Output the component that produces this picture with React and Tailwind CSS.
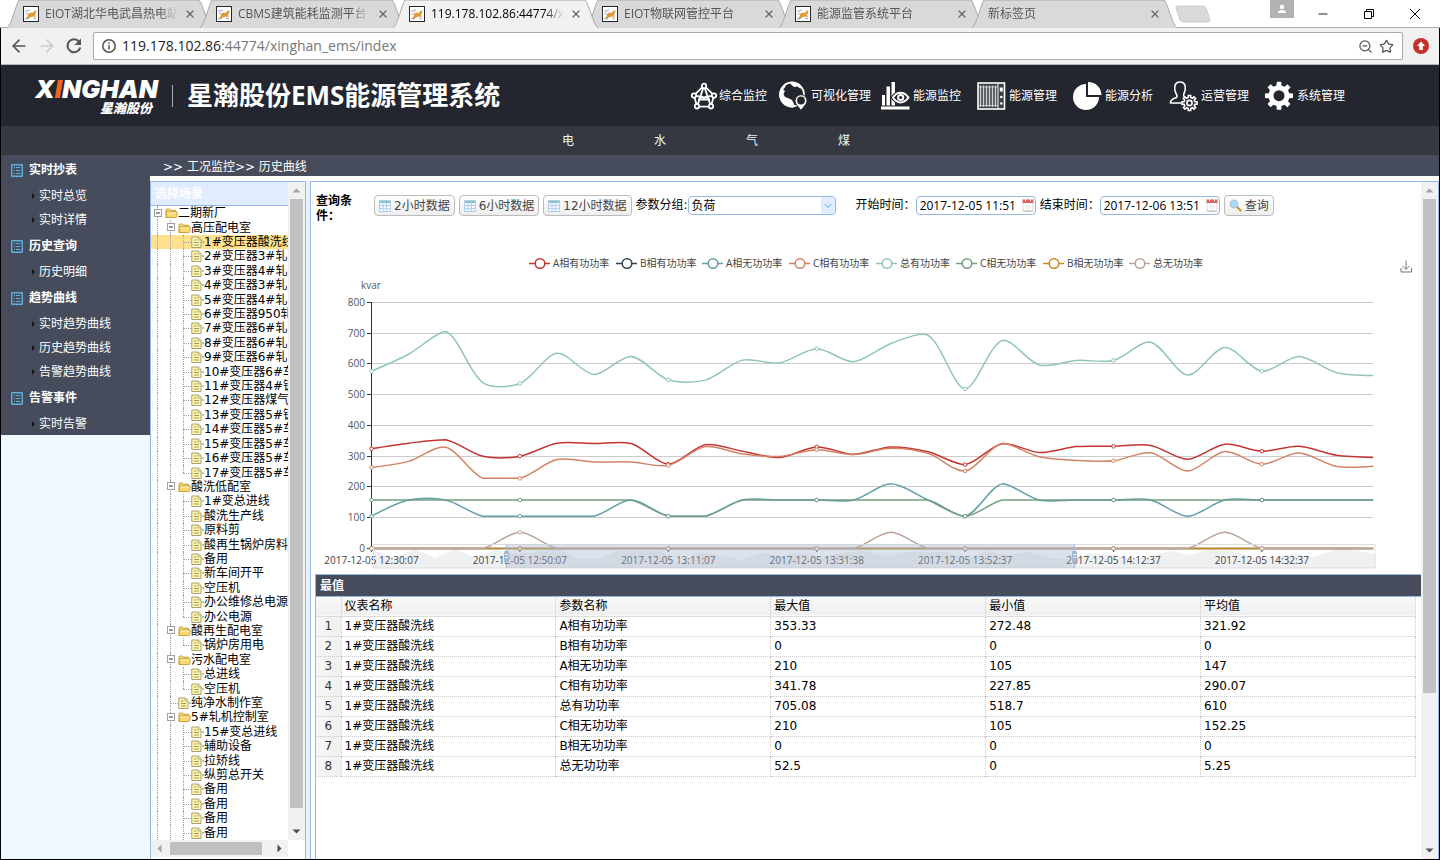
import React, { useState } from "react";
import { ArrowLeft, ArrowRight, Star, ZoomOut, Minus, X, ChevronDown } from "lucide-react";

const tabs = [
  { title: "EIOT湖北华电武昌热电站", icon: true },
  { title: "CBMS建筑能耗监测平台", icon: true },
  { title: "119.178.102.86:44774/x", icon: true, active: true },
  { title: "EIOT物联网管控平台", icon: true },
  { title: "能源监管系统平台", icon: true },
  { title: "新标签页" },
];

const sideMenu = [
  { name: "实时抄表", items: ["实时总览", "实时详情"] },
  { name: "历史查询", items: ["历史明细"] },
  { name: "趋势曲线", items: ["实时趋势曲线", "历史趋势曲线", "告警趋势曲线"] },
  { name: "告警事件", items: ["实时告警"] },
];

const tree = [
  { d: 0, name: "二期新厂" },
  { d: 1, name: "高压配电室" },
  { d: 2, name: "1#变压器酸洗线" },
  { d: 2, name: "2#变压器3#轧" },
  { d: 2, name: "3#变压器4#轧" },
  { d: 2, name: "4#变压器3#轧" },
  { d: 2, name: "5#变压器4#轧" },
  { d: 2, name: "6#变压器950轧" },
  { d: 2, name: "7#变压器6#轧" },
  { d: 2, name: "8#变压器6#轧" },
  { d: 2, name: "9#变压器6#轧" },
  { d: 2, name: "10#变压器6#车" },
  { d: 2, name: "11#变压器4#镀" },
  { d: 2, name: "12#变压器煤气" },
  { d: 2, name: "13#变压器5#镀" },
  { d: 2, name: "14#变压器5#车" },
  { d: 2, name: "15#变压器5#车" },
  { d: 2, name: "16#变压器5#车" },
  { d: 2, name: "17#变压器5#车", last: true },
  { d: 1, name: "酸洗低配室" },
  { d: 2, name: "1#变总进线" },
  { d: 2, name: "酸洗生产线" },
  { d: 2, name: "原料剪" },
  { d: 2, name: "酸再生锅炉房料" },
  { d: 2, name: "备用" },
  { d: 2, name: "新车间开平" },
  { d: 2, name: "空压机" },
  { d: 2, name: "办公维修总电源" },
  { d: 2, name: "办公电源", last: true },
  { d: 1, name: "酸再生配电室" },
  { d: 2, name: "锅炉房用电", last: true },
  { d: 1, name: "污水配电室" },
  { d: 2, name: "总进线" },
  { d: 2, name: "空压机", last: true },
  { d: 1, name: "纯净水制作室", leaf: true },
  { d: 1, name: "5#轧机控制室" },
  { d: 2, name: "15#变总进线" },
  { d: 2, name: "辅助设备" },
  { d: 2, name: "拉矫线" },
  { d: 2, name: "纵剪总开关" },
  { d: 2, name: "备用" },
  { d: 2, name: "备用" },
  { d: 2, name: "备用" },
  { d: 2, name: "备用" },
];

const Z = 157.5;
const series = [
  {
    name: "A相有功功率", color: "#c23531", lx: 540, max: "353.33", min: "272.48", avg: "321.92",
    data: [324, 342, 353.33, 300, 300, 342, 341, 341, 274, 337, 316, 296, 330, 306, 330, 314, 272.48, 340, 312, 331, 332, 335, 290, 339, 316, 332, 303, 296],
  },
  {
    name: "B相有功功率", color: "#2f4554", lx: 627, max: "0", min: "0", avg: "0",
    data: Array(28).fill(0),
  },
  {
    name: "A相无功功率", color: "#61a0a8", lx: 713, max: "210", min: "105", avg: "147",
    data: [105, Z, Z, 105, 105, 105, 105, Z, 105, 105, Z, Z, Z, Z, 210, Z, 105, 210, Z, Z, Z, Z, 105, Z, Z, Z, Z, Z],
  },
  {
    name: "C相有功功率", color: "#d48265", lx: 800, max: "341.78", min: "227.85", avg: "290.07",
    data: [263, 283, 329, 227.85, 227.85, 289, 281, 281, 270, 331, 307, 299, 321, 305, 326, 309, 252, 341.78, 298, 286, 285, 311, 252, 315, 274, 310, 267, 267],
  },
  {
    name: "总有功功率", color: "#91c7ae", lx: 887, max: "705.08", min: "518.7", avg: "610",
    data: [576, 631, 705.08, 539, 536, 634, 565, 624, 548, 547, 612, 603, 649, 607, 666, 693, 518.7, 676, 596, 611, 611, 670, 564, 653, 576, 624, 572, 562],
  },
  {
    name: "C相无功功率", color: "#749f83", lx: 967, max: "210", min: "105", avg: "152.25",
    data: [Z, Z, Z, Z, Z, Z, Z, Z, 105, 105, Z, Z, Z, Z, Z, Z, 105, Z, Z, Z, Z, Z, Z, Z, Z, Z, Z, Z],
  },
  {
    name: "B相无功功率", color: "#ca8622", lx: 1054, max: "0", min: "0", avg: "0",
    data: Array(28).fill(0),
  },
  {
    name: "总无功功率", color: "#bda29a", lx: 1140, max: "52.5", min: "0", avg: "5.25",
    data: Array(28).fill(0).map((v, i) => ([4, 14, 23].includes(i) ? 52.5 : v)),
  },
];

const times = ["12:30:07", "12:50:07", "13:11:07", "13:31:38", "13:52:37", "14:12:37", "14:32:37"];

const px = (i) => 371.5 + i * 37.1;
const py = (v) => 548.5 - v * 0.3078;

// smoothed path, control points are clamped to the bounding box of the series
const smoothPath = (data) => {
  const pts = data.map((v, i) => [px(i), py(v)]);
  const lo = Math.min(...pts.map((p) => p[1]));
  const hi = Math.max(...pts.map((p) => p[1]));
  const clamp = (y) => Math.max(lo, Math.min(hi, y));
  const dist = (a, b) => Math.hypot(a[0] - b[0], a[1] - b[1]);
  let d = `M${pts[0][0]} ${pts[0][1]}`;
  let out = pts[0];
  for (let i = 1; i < pts.length; i++) {
    const p = pts[i];
    const next = pts[i + 1];
    let cp = p;
    let cpNext = p;
    if (next) {
      const prev = pts[i - 1];
      const v = [next[0] - prev[0], next[1] - prev[1]];
      const ratio = dist(p, next) / (dist(p, next) + dist(p, prev));
      cp = [p[0] - v[0] * 0.3 * (1 - ratio), clamp(p[1] - v[1] * 0.3 * (1 - ratio))];
      cpNext = [p[0] + v[0] * 0.3 * ratio, clamp(p[1] + v[1] * 0.3 * ratio)];
    }
    d += `C${out[0]} ${out[1]} ${cp[0]} ${cp[1]} ${p[0]} ${p[1]}`;
    out = cpNext;
  }
  return d;
};

const gearPath = (cx, cy, r1, r2, teeth) => {
  let d = "";
  const step = (Math.PI * 2) / teeth;
  for (let i = 0; i < teeth; i++) {
    const a = i * step - Math.PI / 2;
    [[-0.3, r1], [-0.2, r2], [0.2, r2], [0.3, r1]].forEach(([k, r], j) => {
      const x = (cx + Math.cos(a + k * step) * r).toFixed(2);
      const y = (cy + Math.sin(a + k * step) * r).toFixed(2);
      d += `${i === 0 && j === 0 ? "M" : "L"}${x} ${y}`;
    });
  }
  return d + "Z";
};

/* HEADER ICONS */
const NetworkIcon = () => (
  <svg viewBox="0 0 28 28" className="w-7 h-7 overflow-visible" fill="#23262e" stroke="#fff" strokeWidth="1.8">
    <path d="M17 3.700L7 13.300L10 24.700H24L27 13.300L17 3.700L10 24.700M17 3.700L24 24.700M7 13.300L17 15.500L27 13.300M11 17.500H23" fill="none" />
    <circle cx="17" cy="3.900" r="2.200" />
    <circle cx="7" cy="13.500" r="2.200" />
    <circle cx="27" cy="13.500" r="2.200" />
    <circle cx="10" cy="24.300" r="2.200" />
    <circle cx="24" cy="24.300" r="2.200" />
  </svg>
);

const GlobeIcon = () => (
  <svg viewBox="0 0 28 28" className="w-7 h-7 overflow-visible">
    <circle cx="13" cy="12.500" r="12" fill="none" stroke="#fff" strokeWidth="1.800" />
    <path d="M8 1.500L5.500 6L4 7.500L6 9L4.500 12L6 15L10 16.500L13 18L15 22L16 25C8 27 0 21 0.500 12C1 7 4 3 8 1.500ZM11 0.500L18 1.200L22 4.500L23.500 7L20.500 6L18.500 4.500L15 5L12.500 3Z" fill="#fff" />
    <path d="M22 28.500C19 24 16 22 16 18.700A6 6 0 0 1 28 18.700C28 22 25 24 22 28.500Z" fill="#fff" stroke="#23262e" strokeWidth="1" />
    <circle cx="22" cy="18.500" r="3.900" fill="#23262e" />
  </svg>
);

const BarsEyeIcon = () => (
  <svg viewBox="0 0 28 28" className="w-7 h-7 overflow-visible">
    <path d="M0 24.500H28.500V27.500H0ZM1 13H4V23.500H1ZM5.500 4.500H9V23.500H5.500ZM10.500 0H14V23.500H10.500Z" fill="#fff" />
    <path d="M9.500 15.500C15 6 24 6 29 15.500C24 25 15 25 9.500 15.500Z" fill="#23262e" />
    <path d="M12 15.500C16 9 23 9 27.500 15.500C23 22 16 22 12 15.500Z" fill="none" stroke="#fff" strokeWidth="2" />
    <circle cx="19.700" cy="15.500" r="2.600" fill="none" stroke="#fff" strokeWidth="2" />
  </svg>
);

const RackIcon = () => (
  <svg viewBox="0 0 28 28" className="w-7 h-7 overflow-visible">
    <rect x="1" y="1" width="26.500" height="26" fill="#3b3e46" stroke="#fff" strokeWidth="1.600" />
    <path d="M3.500 3.500V25M6.500 3.500V25M9.500 3.500V25M12.500 3.500V25M15.500 3.500V25M18.500 3.500V25" stroke="#cfcfd2" strokeWidth="1.500" />
    <path d="M21 2V26" stroke="#fff" strokeWidth="1" />
    <path d="M2 5H21M2 23.500H21" stroke="#cfcfd2" strokeWidth="0.800" />
    <rect x="22.800" y="5.500" width="3" height="4" fill="#fff" />
    <circle cx="24.300" cy="15" r="1.300" fill="#fff" />
    <circle cx="24.300" cy="21.500" r="1.300" fill="#fff" />
  </svg>
);

const PieIcon = () => (
  <svg viewBox="0 0 28 28" className="w-7 h-7 overflow-visible" fill="#fff">
    <path d="M13 2A13 13 0 1 0 26 15H13Z" />
    <path d="M15 0A13.200 13.200 0 0 1 28.500 13H15Z" />
  </svg>
);

const UserGearIcon = () => (
  <svg viewBox="0 0 28 28" className="w-7 h-7 overflow-visible" fill="none" stroke="#fff" strokeWidth="1.600">
    <path d="M12 21H1.500C1 17.500 5 16.500 7.500 15.500C8.500 14.500 8 13 7 11.500C5 8 4.500 0 11 0C17.500 0 17 8 15 11.500C14.500 13 14 14 15.500 15" />
    <path d={gearPath(20.5, 21, 5.6, 7.6, 8)} />
    <circle cx="20.500" cy="21" r="2.600" />
  </svg>
);

const GearIcon = () => (
  <svg viewBox="0 0 28 28" className="w-7 h-7 overflow-visible">
    <path d={gearPath(14, 13.7, 10.6, 14.2, 8)} fill="#fff" />
    <circle cx="14" cy="13.700" r="5.500" fill="#23262e" />
  </svg>
);

const topNav = [
  { name: "综合监控", Icon: NetworkIcon, space: "mr-3" },
  { name: "可视化管理", Icon: GlobeIcon, space: "mr-2.5" },
  { name: "能源监控", Icon: BarsEyeIcon, space: "mr-4" },
  { name: "能源管理", Icon: RackIcon, space: "mr-4" },
  { name: "能源分析", Icon: PieIcon, space: "mr-4" },
  { name: "运营管理", Icon: UserGearIcon, space: "mr-4" },
  { name: "系统管理", Icon: GearIcon, space: "" },
];

/* SMALL ICONS */
const Favicon = () => (
  <svg viewBox="0 0 16 16" className="w-4 h-4 shrink-0">
    <rect x="0.500" y="0.500" width="15" height="15" fill="#fff" stroke="#26262e" />
    <path d="M2.500 12.500L5 10L4.500 8.500L7 6.500L9.500 7L11.500 5L13.500 4L13 7L12 9L13 11.500L10.500 10.500L8 11L5 12.500Z" fill="#dd9a3a" />
    <path d="M2 5.500L5 4.500L7 4M2 13L6 12.500M2.500 8.500L5 6.500M10 12L13 13" stroke="#8a93a5" strokeWidth="0.800" fill="none" />
  </svg>
);

const MenuIcon = () => (
  <svg viewBox="0 0 12 13" className="w-3 h-[13px] shrink-0" fill="none" stroke="#5fb0dc">
    <rect x="0.700" y="0.700" width="10.600" height="11.600" rx="0.500" strokeWidth="1.400" />
    <path d="M2.800 3.500H4M5 3.500H9.300M2.800 6.500H4M5 6.500H9.300M2.800 9.500H4M5 9.500H9.300" />
  </svg>
);

const FolderIcon = () => (
  <svg viewBox="0 0 13 14" className="w-[13px] h-[14px] shrink-0">
    <path d="M1 11.500V4Q1 3 2 3H4.500L5.500 4.200H10.500V6" fill="#f6dc8a" stroke="#c9992c" strokeWidth="0.900" />
    <path d="M1 11.500L1.500 6.500Q1.600 5.700 2.500 5.700H11.500Q12.500 5.700 12.300 6.500L11.600 10.700Q11.400 11.600 10.500 11.600Z" fill="#fbd970" stroke="#c9992c" strokeWidth="0.900" />
    <path d="M2.500 7H11.500" stroke="#fff3c0" />
  </svg>
);

const FileIcon = () => (
  <svg viewBox="0 0 13 14" className="w-[13px] h-[14px] shrink-0">
    <path d="M0.800 2H7.500L10 4.500V12.500H0.800Z" fill="#fdf6b0" stroke="#aaa273" strokeWidth="1" />
    <path d="M7 2V5H10" fill="none" stroke="#aaa273" strokeWidth="0.800" />
    <path d="M3 5H5.500M3 7.500H8M3 10H8" stroke="#a89c55" strokeWidth="1" />
    <path d="M12 6V8" stroke="#46a06a" />
  </svg>
);

const CalendarIcon = () => (
  <svg viewBox="0 0 12 12" className="w-3 h-3 shrink-0">
    <rect x="0.500" y="0.500" width="11" height="11" fill="#f3f9ff" stroke="#b4cdea" />
    <rect x="1" y="1" width="10" height="2" fill="#8cc4c4" />
    <path d="M1 5.500H11M1 8.500H11M4 3V11M7.500 3V11" stroke="#b0d0f2" />
  </svg>
);

const DateIcon = () => (
  <svg viewBox="0 0 12 14" className="w-3 h-[14px]">
    <rect x="1" y="2" width="10" height="10.500" fill="#fff" stroke="#d0d0d0" strokeWidth="0.800" />
    <rect x="0.600" y="1.500" width="10.800" height="3.500" fill="#e0655d" />
    <path d="M3.500 0.500V3M8.500 0.500V3" stroke="#fff" strokeWidth="1" />
    <path d="M3.500 8H8.500M3.500 10H8.500" stroke="#ddd" strokeWidth="0.900" />
    <path d="M1 13.500H11" stroke="#bbb" strokeWidth="0.800" />
  </svg>
);

const SearchIcon = () => (
  <svg viewBox="0 0 13 13" className="w-[13px] h-[13px] shrink-0">
    <path d="M7.500 7.500L11.500 11.500" stroke="#d98c2f" strokeWidth="2.200" strokeLinecap="round" />
    <circle cx="5" cy="5" r="3.800" fill="#a9d8fa" stroke="#a9c4d8" strokeWidth="1.200" />
  </svg>
);

const Arrow = ({ dir, light }) => {
  const paths = {
    up: "M0.500 6.500L4.500 2.500L8.500 6.500Z",
    down: "M0.500 2.500L4.500 6.500L8.500 2.500Z",
    left: "M6.500 0.500L2.500 4.500L6.500 8.500Z",
    right: "M2.500 0.500L6.500 4.500L2.500 8.500Z",
  };
  return (
    <svg viewBox="0 0 9 9" className="w-[9px] h-[9px]" fill={light ? "#a3a3a3" : "#505050"}>
      <path d={paths[dir]} />
    </svg>
  );
};

/* SCENE TREE */
const TreeCell = ({ kind }) => (
  <span className="relative w-[13px] self-stretch shrink-0 flex items-center justify-center">
    {kind !== "end" && <span className="absolute left-[5px] inset-y-0 border-l border-dotted border-gray-400" />}
    {kind === "end" && <span className="absolute left-[5px] top-0 h-1/2 border-l border-dotted border-gray-400" />}
    {(kind === "join" || kind === "end") && (
      <span className="absolute left-[5px] right-0 top-1/2 border-t border-dotted border-gray-400" />
    )}
    {kind === "open" && (
      <svg viewBox="0 0 9 9" className="relative w-[9px] h-[9px]">
        <rect x="0.500" y="0.500" width="7" height="7" fill="#fff" stroke="#a0a0a0" />
        <path d="M2 4H6" stroke="#333" />
      </svg>
    )}
  </span>
);

const SceneTree = () => {
  const [selected, setSelected] = useState(2);

  return (
    <ul className="flex-1 min-h-0 flex flex-col overflow-hidden">
      {tree.map((n, i) => {
        const file = n.d === 2 || n.leaf;
        return (
          <li
            key={i}
            onClick={() => setSelected(i)}
            className={`flex-1 min-h-0 flex items-center pl-px leading-[14px] whitespace-nowrap overflow-hidden ${selected === i ? "bg-[#ffe08c]" : ""}`}
          >
            {n.d > 0 && <TreeCell kind="line" />}
            {n.d > 1 && <TreeCell kind="line" />}
            <TreeCell kind={n.last ? "end" : file ? "join" : "open"} />
            {file ? <FileIcon /> : <FolderIcon />}
            <span>{n.name}</span>
          </li>
        );
      })}
    </ul>
  );
};

/* HISTORY CHART */
const shadow =
  "373,550 394,558 414,549 435,558 455,549 475,558 496,550 517,554 558,549 579,559 599,559 618,551 660,551 680,563 700,552 720,556 742,560 761,553 782,556 802,553 822,557 842,553 864,551 886,557 905,552 946,552 967,558 987,551 1008,555 1028,552 1049,558 1072,559 1091,553 1113,555 1136,559 1170,551 1190,555 1211,550 1230,551 1254,557 1273,557 1292,554 1315,557 1335,550 1354,550 1375,554 1375,568 373,568";

const HistoryChart = () => (
  <svg viewBox="315 225 1106 349" className="block w-full font-['Open_Sans','Noto_Sans_CJK_SC',sans-serif]" fontSize="10">
    {/* legend */}
    {series.map((s) => (
      <g key={s.name}>
        <path d={`M${s.lx - 11} 263.500H${s.lx + 10}`} stroke={s.color} strokeWidth="1.500" />
        <circle cx={s.lx} cy="263.500" r="4.800" fill="#fff" stroke={s.color} strokeWidth="1.500" />
        <text x={s.lx + 13} y="267" fill="#444">{s.name}</text>
      </g>
    ))}

    {/* save as image */}
    <path d="M1406 260.500V269M1402.500 266L1406 269.500L1409.500 266M1401 268V272H1411.500V268" fill="none" stroke="#777" />

    {/* y axis */}
    <text x="371" y="289" textAnchor="middle" fill="#555">kvar</text>
    {[0, 100, 200, 300, 400, 500, 600, 700, 800].map((v) => (
      <g key={v}>
        <path d={`M371 ${Math.floor(py(v)) + 0.5}H1373`} stroke="#ccc" />
        <path d={`M367 ${Math.floor(py(v)) + 0.5}H371`} stroke="#333" />
        <text x="365" y={Math.floor(py(v)) + 4} textAnchor="end" fill="#555">{v}</text>
      </g>
    ))}
    <path d="M371.500 302V549" stroke="#333" />

    {/* x axis */}
    {times.map((t, i) => (
      <g key={t}>
        <path d={`M${px(i * 4)} 548V552`} stroke="#333" />
        <text x={px(i * 4)} y="564" textAnchor="middle" fill="#444">{`2017-12-05 ${t}`}</text>
      </g>
    ))}

    {series.map((s) => (
      <g key={s.name}>
        <path d={smoothPath(s.data)} fill="none" stroke={s.color} strokeWidth="1.500" />
        {times.map((t, i) => (
          <circle key={t} cx={px(i * 4)} cy={py(s.data[i * 4])} r="1.800" fill="#fff" stroke={s.color} />
        ))}
      </g>
    ))}

    {/* data zoom slider */}
    <polygon points={shadow} fill="#2f4554" fillOpacity="0.080" />
    <rect x="373.500" y="544.500" width="1001.500" height="23.500" fill="none" stroke="#ddd" />
    <rect x="506.500" y="544.500" width="568" height="23.500" fill="#a7b7cc" fillOpacity="0.400" />
    {[506.5, 1074.5].map((x) => (
      <g key={x}>
        <path d={`M${x} 544.500V568`} stroke="#a7b7cc" />
        <rect x={x - 2.5} y="551" width="5" height="11" rx="1" fill="#a7b7cc" />
        <path d={`M${x - 1.5} 554.500H${x + 1.5}M${x - 1.5} 557.500H${x + 1.5}`} stroke="#fff" strokeWidth="0.800" />
      </g>
    ))}
  </svg>
);

const btn =
  "h-[21px] flex items-center gap-[3px] px-1 rounded border border-[#bbb] bg-linear-to-b from-white to-[#eee] text-[#444] whitespace-nowrap";
const box = "h-[19px] rounded border border-[#95b8e7] bg-white text-black outline-none";

const App = () => {
  const [group, setGroup] = useState("负荷");
  const [start, setStart] = useState("2017-12-05 11:51");
  const [end, setEnd] = useState("2017-12-06 13:51");

  return (
    <div className="h-screen flex flex-col overflow-hidden bg-white text-black text-xs font-['DejaVu_Sans','Noto_Sans_CJK_SC',sans-serif]">

      {/* Browser tabs */}
      <div className="h-7 shrink-0 flex justify-between border-b border-[#a9a9a9] font-['Open_Sans','Noto_Sans_CJK_SC',sans-serif]">
        <div className="flex pl-[7px]">
          {tabs.map((t) => (
            <div key={t.title} className={`relative w-[205px] h-7 -mr-3 flex items-center px-4 ${t.active ? "z-10" : ""}`}>
              <svg viewBox="0 0 205 28" preserveAspectRatio="none" className="absolute inset-0 w-full h-full">
                <path
                  d="M0 28C5 24 9 4 12 0H192C196 4 200 24 205 28"
                  fill={t.active ? "#f1f1f1" : "#d9d9d9"}
                  stroke="#a9a9a9"
                />
              </svg>
              <div className="relative flex-1 min-w-0 flex items-center gap-1.5">
                {t.icon && <Favicon />}
                <span className={`flex-1 min-w-0 overflow-hidden whitespace-nowrap mask-r-from-85% ${t.active ? "text-black" : "text-[#555]"}`}>
                  {t.title}
                </span>
                <button aria-label="关闭标签页" className="text-[#666]"><X size={12} strokeWidth={2.5} /></button>
              </div>
            </div>
          ))}
          <svg viewBox="0 0 36 28" className="w-9 h-7 ml-2.5">
            <path d="M2 6H28Q30 6 31 8L35 20Q35 22 33 22H8Q6 22 5 20L1 8Q1 6 2 6Z" fill="#d9d9d9" stroke="#ccc" />
          </svg>
        </div>
        <div className="flex pr-3.5 text-black">
          <div className="w-6 h-[18px] mr-[18px] bg-[#b3b1b3] flex items-center justify-center">
            <svg viewBox="0 0 10 10" className="w-2.5 h-2.5" fill="#fff">
              <circle cx="5" cy="3" r="2.200" />
              <path d="M1 9V7.500Q2 6 5 6T9 7.500V9Z" />
            </svg>
          </div>
          <button aria-label="最小化" className="w-[22px] flex items-center justify-center mr-6"><Minus size={14} strokeWidth={1.5} /></button>
          <button aria-label="还原" className="w-[22px] flex items-center justify-center mr-6">
            <svg viewBox="0 0 10 10" className="w-2.5 h-2.5 overflow-visible" fill="none" stroke="#000">
              <path d="M0.500 2.500H7.500V9.500H0.500ZM2.500 2.500V0.500H9.500V7.500H7.500" />
            </svg>
          </button>
          <button aria-label="关闭" className="w-[22px] flex items-center justify-center">
            <svg viewBox="0 0 10 10" className="w-2.5 h-2.5 overflow-visible" stroke="#000">
              <path d="M0 0L10 10M10 0L0 10" />
            </svg>
          </button>
        </div>
      </div>

      <div className="flex-1 min-h-0 flex flex-col border-x border-b border-black">

        {/* Address bar */}
        <div className="h-[37px] shrink-0 flex items-center bg-[#f1f1f1] border-b border-[#b6b6b6] pl-2 pr-2.5">
          <button aria-label="后退" className="mr-2 text-[#555]"><ArrowLeft size={20} /></button>
          <button aria-label="前进" className="mr-2 text-[#ccc]"><ArrowRight size={20} /></button>
          <button aria-label="刷新" className="mr-2.5">
            <svg viewBox="0 0 18 18" className="w-[18px] h-[18px]">
              <path d="M14 4.500A6.500 6.500 0 1 0 15.300 10.500" fill="none" stroke="#555" strokeWidth="2" />
              <path d="M16 1.500V8H9.500Z" fill="#555" />
            </svg>
          </button>
          <div className="flex-1 h-7 flex items-center gap-1.5 px-2 bg-white border border-[#a9a9a9] rounded-xs">
            <svg viewBox="0 0 14 14" className="w-3.5 h-3.5 shrink-0" fill="none" stroke="#555" strokeWidth="1.500">
              <circle cx="7" cy="7" r="6.200" />
              <path d="M7 6V10.500M7 3.300V4.800" />
            </svg>
            <p className="flex-1 text-sm text-[#777] font-['Open_Sans',sans-serif]">
              <span className="text-[#222]">119.178.102.86</span>:44774/xinghan_ems/index
            </p>
            <ZoomOut size={15} className="text-[#555]" />
            <Star size={15} className="text-[#555]" />
          </div>
          <svg viewBox="0 0 16 16" className="w-4 h-4 ml-2.5">
            <circle cx="8" cy="8" r="8" fill="#c5322b" />
            <path d="M8 3.500L12 8H9.800V12H6.200V8H4Z" fill="#fff" />
          </svg>
        </div>

        {/* Header */}
        <header className="h-[61px] shrink-0 flex items-center justify-between bg-[#23262e] text-white pl-[34px] pr-[94px] font-['Open_Sans','Noto_Sans_CJK_SC',sans-serif]">
          <div className="flex items-center">
            <div className="flex flex-col pr-1 italic">
              <span className="font-black text-[25px] leading-[24px] font-['Inter',sans-serif]">
                X<span className="text-[#f0661e]">I</span>NGHAN
              </span>
              <span className="font-black text-[13px] leading-[14px] self-end pr-1.5">星瀚股份</span>
            </div>
            <span className="h-[22px] border-l border-[#aaa] ml-2.5 mr-3.5" />
            <h1 className="text-[26px] font-bold">星瀚股份EMS能源管理系统</h1>
          </div>
          <nav className="flex items-center">
            {topNav.map(({ name, Icon, space }) => (
              <a key={name} href="#" className={`flex items-center gap-1 whitespace-nowrap ${space}`}>
                <Icon />
                <span>{name}</span>
              </a>
            ))}
          </nav>
        </header>

        {/* Energy type nav */}
        <nav className="h-[29px] shrink-0 flex items-center justify-center pt-px pr-7 bg-[#363841] text-[#e4fbf6]">
          {["电", "水", "气", "煤"].map((n) => (
            <a key={n} href="#" className="w-[92px] text-center">{n}</a>
          ))}
        </nav>

        <div className="flex-1 min-h-0 flex">

          {/* Sidebar */}
          <aside className="w-[149px] shrink-0 bg-[#f0f8ff]">
            <div className="bg-[#464c5b] text-white">
              {sideMenu.map((m) => (
                <div key={m.name}>
                  <div className="h-7 flex items-center gap-1.5 pt-0.5 pl-2.5 font-bold"><MenuIcon />{m.name}</div>
                  {m.items.map((n) => (
                    <a key={n} href="#" className="h-6 flex items-center gap-1 pt-0.5 pl-[31px]">
                      <svg viewBox="0 0 3 6" className="w-[3px] h-1.5"><path d="M0 0L3 3L0 6Z" fill="#15171c" /></svg>
                      {n}
                    </a>
                  ))}
                </div>
              ))}
            </div>
          </aside>

          <div className="flex-1 min-w-0 flex flex-col">
            <div className="h-[21px] shrink-0 flex items-center pt-0.5 bg-[#464c5b] text-white pl-[13px]">&gt;&gt; 工况监控&gt;&gt; 历史曲线</div>

            <div className="flex-1 min-h-0 flex pt-[5px]">

              {/* Scene panel */}
              <section className="w-[156px] shrink-0 flex border border-b-0 border-[#95b8e7]">
                <div className="flex-1 min-w-0 flex flex-col">
                  <h2 className="h-6 shrink-0 flex items-center px-1 bg-[#e0ecff] border-b border-[#95b8e7] text-white font-bold">选择场景</h2>
                  <SceneTree />
                  <div className="h-[17px] mb-0.5 shrink-0 flex items-center justify-between bg-[#f1f1f1] px-1">
                    <Arrow dir="left" light />
                    <div className="w-[92px] h-[13px] mr-2 bg-[#c1c1c1]" />
                    <Arrow dir="right" />
                  </div>
                </div>
                <div className="w-[17px] mb-[19px] flex flex-col items-center bg-[#f1f1f1]">
                  <div className="h-[17px] flex items-center"><Arrow dir="up" light /></div>
                  <div className="w-[13px] flex-1 bg-[#c1c1c1]" />
                  <div className="h-8 flex items-end pb-1"><Arrow dir="down" /></div>
                </div>
              </section>

              <div className="w-1 shrink-0 bg-[#e6f0ff]" />

              {/* Main panel */}
              <main className="flex-1 min-w-0 flex border border-b-0 border-[#95b8e7]">
                <div className="flex-1 min-w-0 flex flex-col pl-1">
                  <div className="h-[43px] shrink-0 flex items-start pt-3 pl-px">
                    <div className="w-[58px] font-bold leading-[15px] pr-4">查询条件：</div>
                    <div className="flex items-start pt-px">
                      <button className={`${btn} mr-1`}><CalendarIcon />2小时数据</button>
                      <button className={`${btn} mr-1`}><CalendarIcon />6小时数据</button>
                      <button className={`${btn} mr-1`}><CalendarIcon />12小时数据</button>
                      <label htmlFor="group" className="leading-[21px]">参数分组:</label>
                      <div className="relative mr-5 mt-px">
                        <select id="group" value={group} onChange={(e) => setGroup(e.target.value)} className={`${box} block w-[148px] pl-[3px] appearance-none`}>
                          <option>负荷</option>
                          <option>电压</option>
                          <option>电流</option>
                        </select>
                        <span className="absolute right-px top-px h-[17px] w-3.5 rounded-r bg-[#e0ecff] flex items-center justify-center pointer-events-none">
                          <ChevronDown size={12} className="text-[#5aa9ec]" />
                        </span>
                      </div>
                      <label htmlFor="start" className="leading-[21px]">开始时间：</label>
                      <div className="relative mr-1 mt-px">
                        <input id="start" value={start} onChange={(e) => setStart(e.target.value)} className={`${box} block w-[120px] pl-[3px] font-['Open_Sans',sans-serif]`} />
                        <span className="absolute right-0.5 top-0.5"><DateIcon /></span>
                      </div>
                      <label htmlFor="end" className="leading-[21px]">结束时间：</label>
                      <div className="relative mr-1 mt-px">
                        <input id="end" value={end} onChange={(e) => setEnd(e.target.value)} className={`${box} block w-[120px] pl-[3px] font-['Open_Sans',sans-serif]`} />
                        <span className="absolute right-0.5 top-0.5"><DateIcon /></span>
                      </div>
                      <button className={btn}><SearchIcon />查询</button>
                    </div>
                  </div>

                  <HistoryChart />

                  {/* Extremes table */}
                  <section className="flex-1 min-h-0 border-l border-[#95b8e7]">
                    <h2 className="h-[23px] flex items-center px-1 bg-[#464c5b] border-y border-[#95b8e7] text-white font-bold">最值</h2>
                    <div className="pr-[5px]">
                      <table className="w-full table-fixed border-collapse text-left">
                        <thead>
                          <tr className="h-[19px] bg-linear-to-b from-[#f9f9f9] to-[#efefef] border-b border-[#ddd]">
                            <th className="w-[25px] p-0 border-r border-dotted border-[#ccc]" />
                            {["仪表名称", "参数名称", "最大值", "最小值", "平均值"].map((h) => (
                              <th key={h} className="h-[19px] p-0 pl-[3px] font-normal leading-[18px] border-r border-dotted border-[#ccc]">{h}</th>
                            ))}
                          </tr>
                        </thead>
                        <tbody>
                          {series.map((s, i) => (
                            <tr key={s.name} className="h-5 border-b border-dotted border-[#ccc]">
                              <td className="p-0 text-center text-[#333] bg-linear-to-r from-[#f7f7f7] to-[#efefef] border-r border-dotted border-[#ccc]">{i + 1}</td>
                              {["1#变压器酸洗线", s.name, s.max, s.min, s.avg].map((v, j) => (
                                <td key={j} className="h-5 p-0 pl-[3px] leading-[18px] border-r border-dotted border-[#ccc]">{v}</td>
                              ))}
                            </tr>
                          ))}
                        </tbody>
                      </table>
                    </div>
                  </section>
                </div>
                <div className="w-[17px] shrink-0 flex flex-col items-center bg-[#f1f1f1]">
                  <div className="h-[17px] flex items-center"><Arrow dir="up" light /></div>
                  <div className="w-[13px] h-[73%] bg-[#c1c1c1]" />
                  <div className="flex-1 flex items-end pb-1"><Arrow dir="down" /></div>
                </div>
              </main>
            </div>
          </div>
        </div>
      </div>
    </div>
  );
};

export default App;
